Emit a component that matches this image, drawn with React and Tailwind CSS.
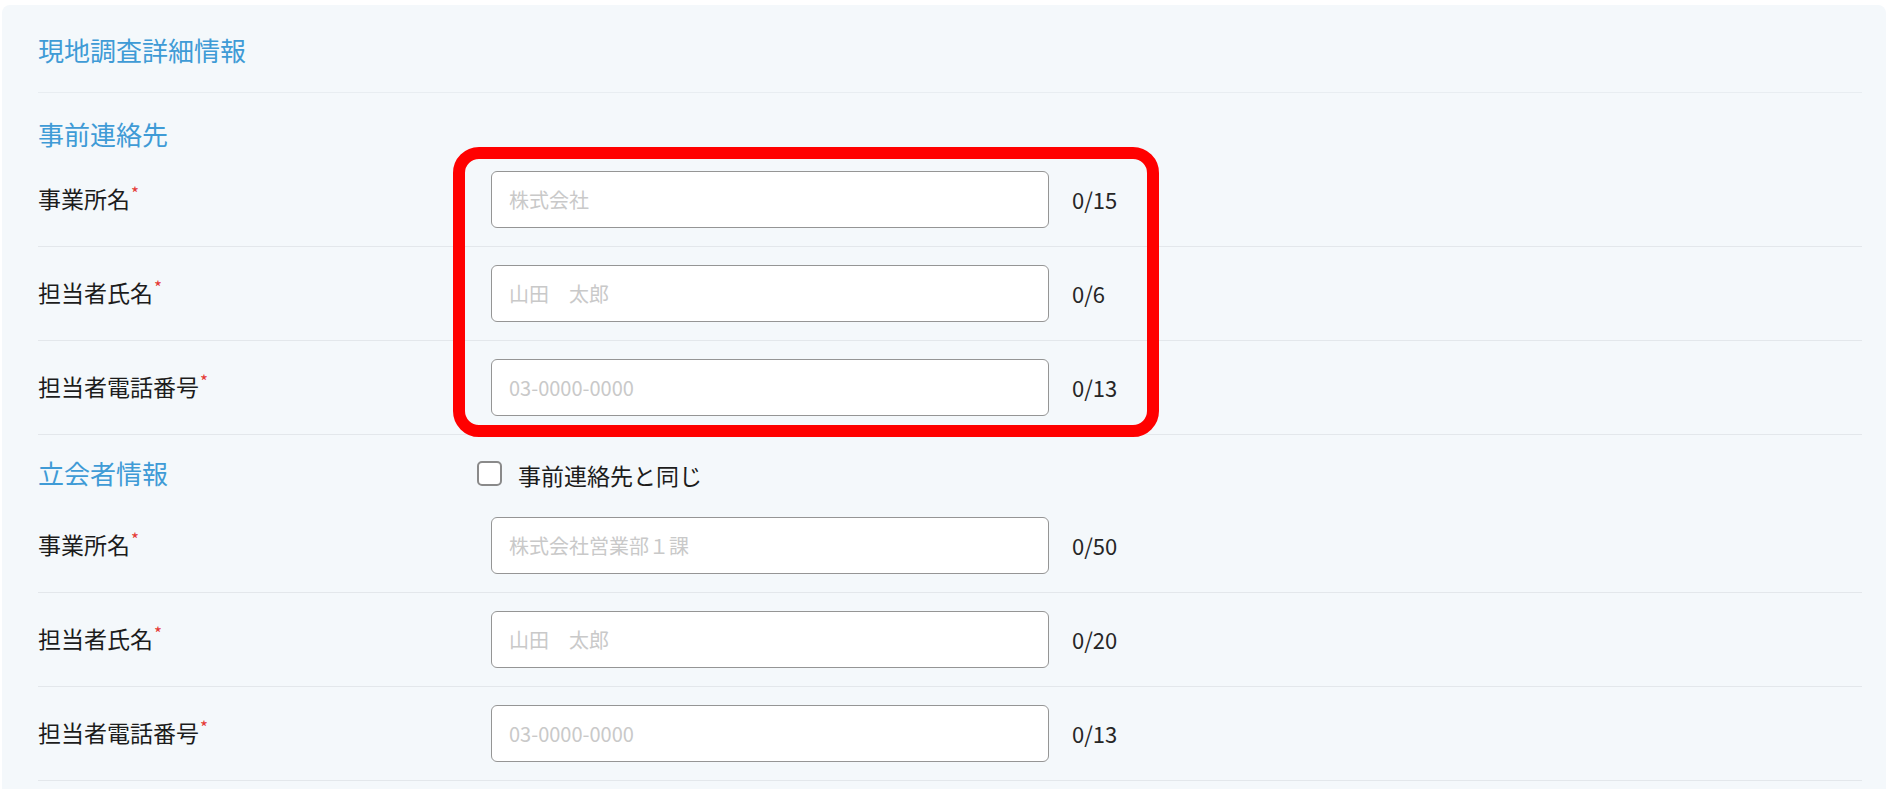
import React from "react";

const jp = { fontFamily: '"Noto Sans CJK JP", "Noto Sans", sans-serif' };

const jizenRenraku = [
    { label: "事業所名", placeholder: "株式会社", max: 15 },
    { label: "担当者氏名", placeholder: "山田　太郎", max: 6 },
    { label: "担当者電話番号", placeholder: "03-0000-0000", max: 13 },
];

const tachiai = [
    { label: "事業所名", placeholder: "株式会社営業部１課", max: 50 },
    { label: "担当者氏名", placeholder: "山田　太郎", max: 20 },
    { label: "担当者電話番号", placeholder: "03-0000-0000", max: 13 },
];

function FieldRow({ label, placeholder, max }) {
    return (
        <div className="flex items-center py-[18px] border-b border-[#e3e7eb]">
            <div className="w-[453px] text-[23px] leading-[32px] text-[#1c1c1c]">
                {label}
                <span className="text-[17px] text-[#e53935] relative top-[-8px] ml-[1px]">*</span>
            </div>
            <input
                type="text"
                placeholder={placeholder}
                className="w-[558px] h-[57px] bg-white border-[1.5px] border-[#959595] rounded-[6px] px-[17px] text-[20px] text-[#333] placeholder:text-[#c9c9c9] outline-none"
                style={jp}
            />
            <div className="ml-[23px] text-[22px] text-[#262626]">0/{max}</div>
        </div>
    );
}

export default function App() {
    return (
        <div className="min-h-screen bg-white pt-[5px] pl-[2px] pr-[2px]" style={jp}>
            <div className="relative bg-[#f4f8fb] rounded-[8px] pl-[36px] pr-[24px] pb-[20px]">
                {/* タイトル */}
                <div className="pt-[29px] pb-[26px] border-b border-[#e8edf1] text-[26px] leading-[32px] text-[#3f9bd6]">
                    現地調査詳細情報
                </div>

                {/* 事前連絡先 */}
                <div className="pt-[25px] pb-[3px] text-[26px] leading-[32px] text-[#3f9bd6]">
                    事前連絡先
                </div>
                {jizenRenraku.map((f, i) => (
                    <FieldRow key={i} {...f} />
                ))}

                {/* 立会者情報 */}
                <div className="flex items-center pt-[22px] pb-[10px]">
                    <div className="w-[439px] text-[26px] leading-[32px] text-[#3f9bd6]">立会者情報</div>
                    <label className="flex items-center">
                        <span className="w-[25px] h-[25px] bg-white border-2 border-[#8a8a8a] rounded-[5px]"></span>
                        <span className="ml-[16px] text-[23px] leading-[32px] text-[#1c1c1c] relative top-[2px]">
                            事前連絡先と同じ
                        </span>
                    </label>
                </div>
                {tachiai.map((f, i) => (
                    <FieldRow key={i} {...f} />
                ))}

                {/* 注釈の赤枠 */}
                <div className="absolute left-[451px] top-[142px] w-[706px] h-[290px] border-[12px] border-[#ff0000] rounded-[26px] pointer-events-none"></div>
            </div>
        </div>
    );
}
